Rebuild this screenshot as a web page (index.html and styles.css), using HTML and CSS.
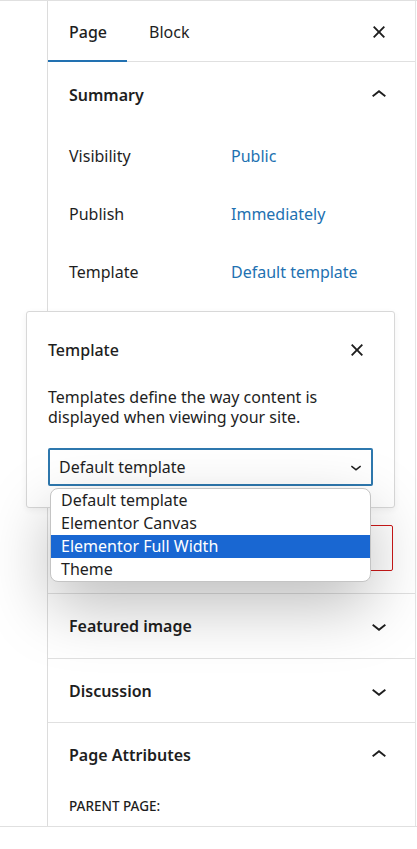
FILE: index.html
```html
<!DOCTYPE html>
<html lang="en">
<head>
<meta charset="utf-8">
<title>Page settings</title>
<link rel="stylesheet" href="styles.css">
</head>
<body>
<div class="screen">
  <aside class="sidebar">
    <div class="tabs">
      <button class="tab active">Page</button>
      <button class="tab">Block</button>
      <span class="grow"></span>
      <span class="icon"><svg viewBox="0 0 24 24" width="30" height="30"><path d="M12 13.06l3.712 3.713 1.061-1.06L13.061 12l3.713-3.712-1.06-1.06L12 10.938 8.288 7.227l-1.061 1.06L10.939 12l-3.712 3.712 1.06 1.061L12 13.061z"/></svg></span>
    </div>

    <section class="panel summary">
      <div class="panel-head">
        <h2>Summary</h2>
        <span class="icon"><svg viewBox="0 0 24 24" width="30" height="30"><path d="M6.5 12.4L12 8l5.5 4.4-.9 1.2L12 10l-4.6 3.6-1-1.2z"/></svg></span>
      </div>
      <div class="rows">
        <div class="row"><span class="label">Visibility</span><span class="value">Public</span></div>
        <div class="row"><span class="label">Publish</span><span class="value">Immediately</span></div>
        <div class="row"><span class="label">Template</span><span class="value">Default template</span></div>
      </div>
      <div class="trash"></div>
    </section>

    <section class="panel">
      <div class="panel-head featured">
        <h2>Featured image</h2>
        <span class="icon"><svg viewBox="0 0 24 24" width="30" height="30"><path d="M17.5 11.6L12 16l-5.5-4.4.9-1.2L12 14l4.6-3.6 1 1.2z"/></svg></span>
      </div>
    </section>

    <section class="panel">
      <div class="panel-head discussion">
        <h2>Discussion</h2>
        <span class="icon"><svg viewBox="0 0 24 24" width="30" height="30"><path d="M17.5 11.6L12 16l-5.5-4.4.9-1.2L12 14l4.6-3.6 1 1.2z"/></svg></span>
      </div>
    </section>

    <section class="panel last">
      <div class="panel-head">
        <h2>Page Attributes</h2>
        <span class="icon"><svg viewBox="0 0 24 24" width="30" height="30"><path d="M6.5 12.4L12 8l5.5 4.4-.9 1.2L12 10l-4.6 3.6-1-1.2z"/></svg></span>
      </div>
      <div class="attr-body"><span class="caps">Parent Page:</span></div>
    </section>
  </aside>
</div>

<div class="popover">
  <div class="pop-head">
    <h3>Template</h3>
    <span class="icon"><svg viewBox="0 0 24 24" width="30" height="30"><path d="M12 13.06l3.712 3.713 1.061-1.06L13.061 12l3.713-3.712-1.06-1.06L12 10.938 8.288 7.227l-1.061 1.06L10.939 12l-3.712 3.712 1.06 1.061L12 13.061z"/></svg></span>
  </div>
  <p class="pop-desc">Templates define the way content is displayed when viewing your site.</p>
  <div class="select">
    <span>Default template</span>
    <svg viewBox="0 0 24 24" width="22" height="22"><path d="M17.5 11.6L12 16l-5.5-4.4.9-1.2L12 14l4.6-3.6 1 1.2z"/></svg>
  </div>
</div>

<ul class="dropdown">
  <li>Default template</li>
  <li>Elementor Canvas</li>
  <li class="sel">Elementor Full Width</li>
  <li>Theme</li>
</ul>
</body>
</html>
```

FILE: styles.css
```css
* { box-sizing: border-box; }
html, body { margin: 0; padding: 0; background: #fff; }
body {
  font-family: "Noto Sans", "Open Sans", sans-serif;
  font-size: 16px;
  color: #1e1e1e;
  width: 417px;
  height: 849px;
  position: relative;
  overflow: hidden;
}
h2, h3, p, ul { margin: 0; padding: 0; }

.screen {
  border-top: 1px solid #e0e0e0;
  border-bottom: 1px solid #e0e0e0;
  display: flex;
}
.sidebar {
  margin-left: 47px;
  width: 369px;
  border-left: 1px solid #dcdcdc;
  border-right: 1px solid #e4e4e4;
  display: flex;
  flex-direction: column;
}

.tabs {
  height: 61px;
  display: flex;
  align-items: center;
  box-shadow: inset 0 -1px 0 #e0e0e0;
  padding-right: 21px;
}
.tab {
  font: inherit;
  font-size: 16px;
  color: #1e1e1e;
  background: none;
  border: 0;
  height: 61px;
  padding: 0 21px;
  width: 79px;
  text-align: left;
  cursor: pointer;
}
.tab.active { box-shadow: inset 0 -2px 0 #2271b1; font-weight: 500; }
.tab + .tab { padding-left: 22px; width: auto; }
.grow { flex: 1; }
.icon { display: flex; width: 30px; height: 30px; }
.icon svg { fill: #1e1e1e; }

.panel { border-bottom: 1px solid #e0e0e0; }
.panel.last { border-bottom: 0; }
.panel-head {
  height: 65px;
  display: flex;
  align-items: center;
  justify-content: space-between;
  padding: 0 21px;
}
.panel-head h2 { font-size: 16px; font-weight: 600; }
.panel-head.featured { height: 64px; }
.panel-head.discussion { height: 63px; }
.last .panel-head { height: 64px; }

.rows { display: flex; flex-direction: column; }
.row {
  height: 58px;
  display: flex;
  align-items: center;
  padding-left: 21px;
}
.label { width: 162px; }
.value { color: #2271b1; }

.trash {
  margin: 224px 22px 22px 21px;
  height: 46px;
  border: 1px solid #cc1818;
  border-radius: 2px;
}

.attr-body { padding: 8px 21px 10px; line-height: 20px; }
.caps { text-transform: uppercase; font-size: 13.5px; font-weight: 500; }

.popover {
  position: absolute;
  left: 26px;
  top: 311px;
  width: 369px;
  height: 197px;
  background: #fff;
  border: 1px solid #d8d8d8;
  border-radius: 3px;
  padding: 23px 21px 0;
  box-shadow: 0 2px 6px rgba(0,0,0,0.06);
  z-index: 2;
}
.pop-head {
  height: 30px;
  display: flex;
  align-items: center;
  justify-content: space-between;
  padding-right: 1px;
}
.pop-head h3 { font-size: 16px; font-weight: 500; }
.pop-desc {
  margin-top: 22px;
  line-height: 20px;
  font-size: 16px;
}
.select {
  margin-top: 21px;
  height: 38px;
  border: 2px solid #2e78ae;
  border-radius: 2px;
  display: flex;
  align-items: center;
  justify-content: space-between;
  padding: 0 4px 0 9px;
}
.select svg { fill: #1e1e1e; }

.dropdown {
  position: absolute;
  left: 50px;
  top: 488px;
  width: 321px;
  list-style: none;
  background: #fff;
  border: 1px solid #c4c4c4;
  border-radius: 8px;
  overflow: hidden;
  box-shadow: 0 24px 64px rgba(0,0,0,0.26);
  z-index: 3;
}
.dropdown li {
  height: 23px;
  line-height: 23px;
  padding-left: 10px;
  font-size: 16px;
  color: #1e1e1e;
}
.dropdown li.sel { background: #1967d2; color: #fff; }
```
